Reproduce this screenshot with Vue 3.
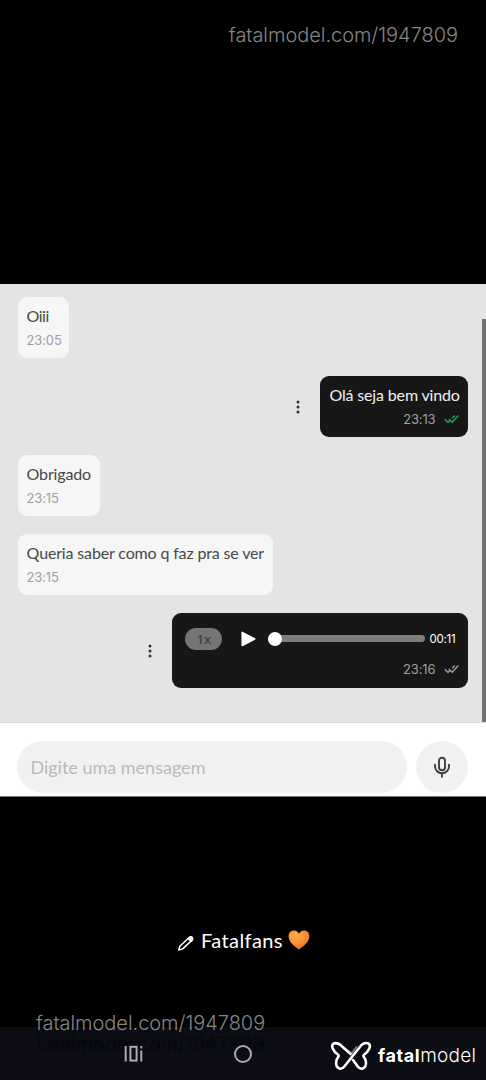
<script setup>
const messages = [
  { id: 1, text: 'Oiii', time: '23:05', width: 51.8, kind: 'first' },
  { id: 2, text: 'Olá seja bem vindo', time: '23:13', mine: true, read: true, width: 148 },
  { id: 3, text: 'Obrigado', time: '23:15', width: 82 },
  { id: 4, text: 'Queria saber como q faz pra se ver', time: '23:15', width: 255.5 },
  { id: 5, audio: '00:11', time: '23:16', mine: true, width: 296 },
]
</script>

<template>
  <div class="screen">
    <header class="top"><span class="watermark">fatalmodel.com/1947809</span></header>

    <main class="chat">
      <div v-for="m in messages" :key="m.id" class="row" :class="[{ mine: m.mine }, m.kind]">
        <svg v-if="m.mine" class="dots" viewBox="0 0 4 14"><circle cx="2" cy="2" r="1.5" /><circle cx="2" cy="7" r="1.5" /><circle cx="2" cy="12" r="1.5" /></svg>
        <div class="bubble" :class="{ voice: m.audio }" :style="{ width: m.width + 'px' }">
          <div v-if="m.audio" class="player">
            <span class="speed">1x</span>
            <svg class="play" viewBox="0 0 15 16"><path d="M1.2 1.4v13.2L13.8 8z" /></svg>
            <span class="track"><i class="knob"></i></span>
            <span class="length">{{ m.audio }}</span>
          </div>
          <p v-else class="text">{{ m.text }}</p>
          <div class="meta">
            <span class="time">{{ m.time }}</span>
            <svg v-if="m.mine" class="ticks" :class="{ read: m.read }" viewBox="0 0 15 10"><path d="M.8 5.2 4 8.4 5.600 6.800M8.200 4.200 10.800 1.600M4.900 5 8.200 8.200 14.300 1.600" /></svg>
          </div>
        </div>
      </div>
      <div class="scrollbar"></div>
    </main>

    <section class="composer">
      <div class="field">Digite uma mensagem</div>
      <div class="mic">
        <svg viewBox="0 0 18 22"><rect x="6" y="1.8" width="6" height="12.4" rx="3" /><path d="M2 8.7v1.6a7 7 0 0 0 14 0V8.7M9 17.3v3.4" /></svg>
      </div>
    </section>

    <section class="caption">
      <svg class="pencil" viewBox="0 0 18 18"><path d="M1.800 16l1-3.800L12 3.800q1.600-1.400 2.900-.2t-.1 2.800L5.600 14.900z" /><path class="tip" d="M11.200 4.500l1.200-1.100q1.400-1.200 2.700 0t.1 2.700l-1.200 1.200z" /></svg>
      <span class="name">Fatalfans</span>
      <svg class="heart" viewBox="0 0 22 20">
        <defs><radialGradient id="warm" cx=".35" cy=".25" r=".85"><stop offset="0" stop-color="#ffac4a" /><stop offset=".6" stop-color="#f78c2c" /><stop offset="1" stop-color="#d8661a" /></radialGradient></defs>
        <path fill="url(#warm)" d="M11 19.400C7 16.800.600 12.400.600 6.300.600 2.800 2.900.600 5.900.600 8.400.600 10.200 2 11 4.100 11.800 2 13.600.600 16.100.600c3 0 5.300 2.200 5.300 5.700C21.400 12.400 15 16.800 11 19.400z" />
      </svg>
    </section>

    <footer class="bottom">
      <span class="watermark low">fatalmodel.com/1947809</span>
      <nav class="nav">
        <span class="watermark ghost" aria-hidden="true">fatalmodel.com/1947809</span>
        <svg class="recent" viewBox="0 0 20 18"><path d="M1.700 1v15.500M17.300 5.500v11M17.300 1v2.400" /><rect x="6.400" y="1.800" width="6.200" height="13.800" /></svg>
        <svg class="home" viewBox="0 0 20 20"><circle cx="10" cy="10" r="8" /></svg>
        <div class="brand">
          <svg class="butterfly" viewBox="0 0 42 30">
            <path class="shade" d="M17.500 9.500l4 3L26.500 6" />
            <path d="M20.500 13 10.500 4C7.500 1.400 3 1.300 2.200 4.600c-.5 2.400 1.500 4.600 2.800 6.400 1.300 1.700 4.200 2.600 3.700 4.200-.4 1.300-2.200 2.200-2.500 5.300-.4 3.200.5 6 3.200 7 2 .700 3.600-.500 5.100-2.200L31.500 4c3-2.700 7.600-2.700 8.400.600.500 2.400-1.500 4.600-2.800 6.400-1.300 1.700-4.200 2.600-3.700 4.200.4 1.300 2.200 2.200 2.500 5.300.4 3.200-.5 6-3.200 7-2 .700-3.700-.500-5.100-2.200L23 19" />
          </svg>
          <span class="word"><b>fatal</b>model</span>
        </div>
      </nav>
    </footer>
  </div>
</template>

<style>
body { margin: 0; background: #000; }
</style>

<style scoped>
* { box-sizing: border-box; }
svg { display: block; flex: none; fill: none; }
.screen { width: 486px; height: 1080px; background: #000; display: flex; flex-direction: column; overflow: hidden; font-family: Lato, "Noto Sans", sans-serif; }
.top { height: 284px; padding: 23px 28px 0 0; text-align: right; }
.watermark { display: block; font: 300 20px/24px Inter, sans-serif; color: #868686; white-space: nowrap; letter-spacing: -.04px; }
.chat { position: relative; height: 439px; background: #e4e4e4; padding: 12.600px 17.600px 0 17.600px; display: flex; flex-direction: column; gap: 17.300px; border-bottom: 1px solid #dadada; }
.row { display: flex; align-items: center; }
.mine { justify-content: flex-end; gap: 20px; }
.dots { width: 4px; height: 14px; margin-top: 1px; fill: #333; }
.bubble { height: 61.700px; padding: 7px 9px; border-radius: 9px; background: #f6f6f6; color: #484848; }
.mine .bubble { background: #171717; color: #efefef; }
.text { margin: 0; font-size: 16px; line-height: 24px; white-space: nowrap; letter-spacing: -.15px; }
.first .text { letter-spacing: -.5px; }
.meta { display: flex; align-items: center; font: 400 13px/24px Inter, sans-serif; color: #a0a0a0; letter-spacing: -.15px; }
.mine .meta { justify-content: flex-end; gap: 9px; }
.ticks { width: 15px; height: 10px; stroke: #a0a0a0; stroke-width: 1.400; }
.read { stroke: #25a65b; }
.bubble.voice { height: 75px; padding-top: 15px; }
.player { height: 22px; display: flex; align-items: center; margin: 0 3px 0 4px; }
.speed { width: 37px; height: 22px; flex: none; border-radius: 11px; background: #757575; color: #464646; font: 600 13px/22px "Noto Sans", sans-serif; text-align: center; }
.play { width: 15px; height: 16px; margin-left: 19px; fill: #fff; stroke: #fff; stroke-width: 1.500; stroke-linejoin: round; }
.track { width: 157px; height: 7px; flex: none; margin-left: 12px; border-radius: 4px; background: #7d7d7d; display: flex; align-items: center; }
.knob { width: 14px; height: 14px; border-radius: 50%; background: #fff; }
.length { width: 27px; flex: none; margin-left: 4px; font: 400 11.500px/16px Inter, sans-serif; color: #fff; letter-spacing: -.25px; white-space: nowrap; }
.voice .meta { margin-top: 7px; }
.scrollbar { position: absolute; right: 0; top: 35px; bottom: 0; width: 4px; background: #727272; }
.composer { height: 74px; padding: 18px 17.500px 3px 17.400px; background: #fff; display: flex; gap: 8.600px; border-bottom: 1px solid #777; }
.field { width: 390px; height: 52px; border-radius: 26px; background: #f1f1f1; color: #b9b9b9; padding-left: 13px; font-size: 18px; line-height: 52px; }
.mic { width: 52px; height: 52px; border-radius: 50%; background: #f1f1f1; display: flex; align-items: center; justify-content: center; }
.mic svg { width: 18px; height: 22px; stroke: #3f3f3f; stroke-width: 1.900; stroke-linecap: round; }
.caption { display: flex; align-items: center; height: 24px; margin-top: 131px; padding-left: 177px; color: #fff; }
.pencil { width: 18px; height: 18px; margin-top: 5px; stroke: #fff; stroke-width: 1.500; stroke-linejoin: round; }
.tip { fill: #fff; }
.name { width: 82px; margin-left: 6px; font-size: 20px; line-height: 24px; letter-spacing: .4px; }
.heart { width: 22px; height: 20px; margin-left: 5px; }
.bottom { margin-top: auto; }
.low { position: relative; z-index: 1; margin: 0 0 -8px 36px; height: 24px; }
.nav { position: relative; height: 53px; background: #0b0c14; display: flex; align-items: center; }
.ghost { position: absolute; left: 36px; top: 5px; color: #07080d; font-weight: 400; letter-spacing: -.3px; }
.recent { position: relative; width: 20px; height: 18px; margin-left: 124px; stroke: #a9aab1; stroke-width: 2; }
.home { position: relative; width: 20px; height: 20px; margin-left: 89px; stroke: #a9aab1; stroke-width: 2; }
.brand { display: flex; align-items: center; margin-left: 77px; margin-top: 5px; }
.butterfly { width: 42px; height: 30px; stroke: #fff; stroke-width: 2.600; stroke-linecap: round; stroke-linejoin: round; }
.shade { stroke: #777982; stroke-width: 2; }
.word { margin-left: 6px; color: #fff; font: 300 19px/24px Inter, sans-serif; letter-spacing: .25px; white-space: nowrap; }
.word b { font-weight: 700; font-size: 18px; letter-spacing: .6px; }
</style>
